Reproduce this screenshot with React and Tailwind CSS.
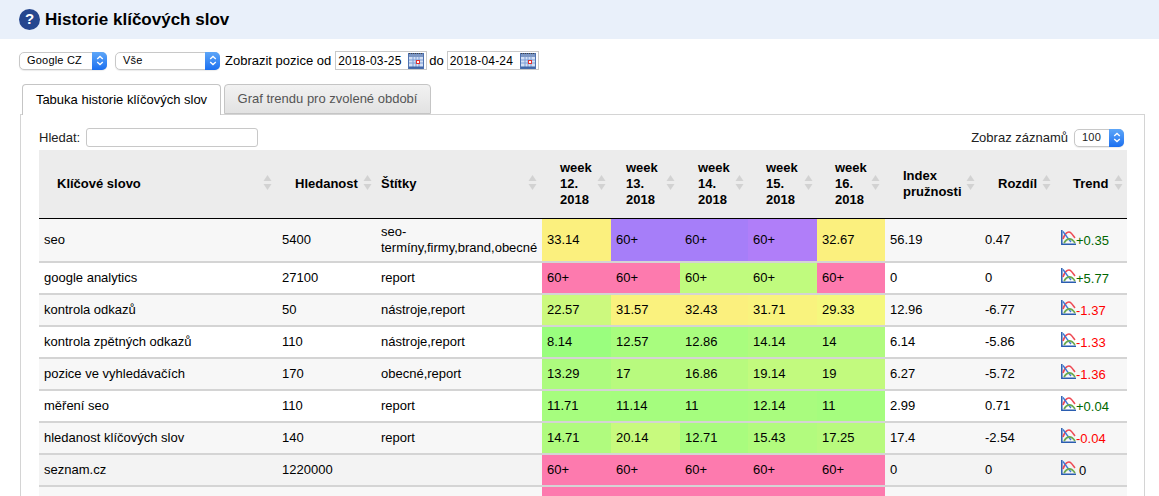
import { useState } from "react"

const pink = "bg-[#fd7aae]"

const rows = [
    { kw: "seo", vol: "5400", tags: "seo-termíny,firmy,brand,obecné", tall: true, cells: [["33.14", "bg-[#fbf07e]"], ["60+", "bg-[#a67ef9]"], ["60+", "bg-[#a67ef9]"], ["60+", "bg-[#b07ef9]"], ["32.67", "bg-[#fbf07e]"]], idx: "56.19", diff: "0.47", trend: "+0.35", color: "text-[#006600]" },
    { kw: "google analytics", vol: "27100", tags: "report", cells: [["60+", pink], ["60+", pink], ["60+", "bg-[#c0fb7e]"], ["60+", "bg-[#c0fb7e]"], ["60+", pink]], idx: "0", diff: "0", trend: "+5.77", color: "text-[#006600]" },
    { kw: "kontrola odkazů", vol: "50", tags: "nástroje,report", cells: [["22.57", "bg-[#ccf97e]"], ["31.57", "bg-[#faf27e]"], ["32.43", "bg-[#fbf07e]"], ["31.71", "bg-[#f9f37e]"], ["29.33", "bg-[#f5f87e]"]], idx: "12.96", diff: "-6.77", trend: "-1.37", color: "text-[#ff0000]" },
    { kw: "kontrola zpětných odkazů", vol: "110", tags: "nástroje,report", cells: [["8.14", "bg-[#9afe7e]"], ["12.57", "bg-[#a8fd7e]"], ["12.86", "bg-[#a9fd7e]"], ["14.14", "bg-[#b0fb7e]"], ["14", "bg-[#b0fb7e]"]], idx: "6.14", diff: "-5.86", trend: "-1.33", color: "text-[#ff0000]" },
    { kw: "pozice ve vyhledávačích", vol: "170", tags: "obecné,report", cells: [["13.29", "bg-[#adfb7e]"], ["17", "bg-[#b8fa7e]"], ["16.86", "bg-[#b8fa7e]"], ["19.14", "bg-[#c2fa7e]"], ["19", "bg-[#c2fa7e]"]], idx: "6.27", diff: "-5.72", trend: "-1.36", color: "text-[#ff0000]" },
    { kw: "měření seo", vol: "110", tags: "report", cells: [["11.71", "bg-[#a6fd7e]"], ["11.14", "bg-[#a5fd7e]"], ["11", "bg-[#a5fd7e]"], ["12.14", "bg-[#a9fc7e]"], ["11", "bg-[#a5fd7e]"]], idx: "2.99", diff: "0.71", trend: "+0.04", color: "text-[#006600]" },
    { kw: "hledanost klíčových slov", vol: "140", tags: "report", cells: [["14.71", "bg-[#b0fb7e]"], ["20.14", "bg-[#c8fa7e]"], ["12.71", "bg-[#a9fc7e]"], ["15.43", "bg-[#b2fb7e]"], ["17.25", "bg-[#b8fa7e]"]], idx: "17.4", diff: "-2.54", trend: "-0.04", color: "text-[#ff0000]" },
    { kw: "seznam.cz", vol: "1220000", tags: "", bg: "bg-[#f3f3f3]", cells: [["60+", pink], ["60+", pink], ["60+", pink], ["60+", pink], ["60+", pink]], idx: "0", diff: "0", trend: "0", color: "text-black" },
    { kw: "", vol: "", tags: "", cells: [["", pink], ["", pink], ["", pink], ["", pink], ["", pink]], idx: "", diff: "", trend: "", color: "text-black" },
]

function SortArrows() {
    return (
        <svg width="9" height="17" viewBox="0 0 9 17" className="shrink-0 -mt-[2px]">
            <path d="M4.5 1 L8.5 7 L0.5 7 Z" fill="#d2d2d2" />
            <path d="M4.5 16 L8.5 10 L0.5 10 Z" fill="#d2d2d2" />
        </svg>
    )
}

function SelectArrows() {
    return (
        <span className="w-[15px] self-stretch -my-px -mr-px rounded-r-[5px] bg-gradient-to-b from-[#5da6f8] to-[#1a6ff0] flex items-center justify-center">
            <svg width="8" height="11" viewBox="0 0 8 11">
                <path d="M1.2 4 L4 1.4 L6.8 4 M1.2 7 L4 9.6 L6.8 7" fill="none" stroke="#fff" strokeWidth="1.3" />
            </svg>
        </span>
    )
}

function CalendarIcon() {
    return (
        <svg width="16" height="17" viewBox="0 0 16 17" className="shrink-0">
            <rect x="0.5" y="1.5" width="15" height="15" fill="#d4e0f4" stroke="#4f72b0" />
            <path d="M1 1.5 H15" stroke="#444" strokeDasharray="1 1" />
            <rect x="1" y="2" width="14" height="3" fill="#7d97c4" />
            <path d="M1 8 H15 M1 11 H15 M5 5 V15 M8 5 V15 M11 5 V15" stroke="#7c9ed6" strokeWidth="1" />
            <rect x="8.5" y="8.5" width="3" height="3" fill="#fff" stroke="#e03030" />
            <rect x="1" y="14.5" width="14" height="2" fill="#3f66a8" />
        </svg>
    )
}

function TrendIcon() {
    return (
        <svg width="15" height="15" viewBox="0 0 15 15" className="shrink-0">
            <path d="M0.8 0 V14.2 H15" fill="none" stroke="#2a5db0" strokeWidth="1.5" />
            <path d="M2 9 C4 2 8 1 10 3 S13 7 14 8" fill="none" stroke="#ee4b55" strokeWidth="1.6" />
            <path d="M2 1.5 L6 7 L10 12" fill="none" stroke="#3a78d8" strokeWidth="1.3" />
            <path d="M3 13 C6 8 10 7 14 13" fill="none" stroke="#6aa84f" strokeWidth="1.6" />
        </svg>
    )
}

function HeadCell({ children, className = "" }) {
    return (
        <th className={`p-0 font-bold text-left align-middle ${className}`}>
            <div className="flex items-center justify-between">
                <span>{children}</span>
                <SortArrows />
            </div>
        </th>
    )
}

function Select({ label, width }) {
    return (
        <span className={`inline-flex items-center h-[18px] ${width} rounded-[5px] border border-[#c8c8c8] bg-white text-[11px] tracking-[0.2px] pl-[7px] justify-between shadow-[0_1px_1px_rgba(0,0,0,0.08)]`}>
            {label}
            <SelectArrows />
        </span>
    )
}

function DateField({ value }) {
    return (
        <span className="inline-flex items-center h-[19px] w-[92px] border border-[#c9c9c9] bg-white pl-[2px] pr-[2px] text-[12px] justify-between">
            <span className="tracking-[0.2px]">{value}</span>
            <CalendarIcon />
        </span>
    )
}

export default function App() {
    const [tab] = useState(0)

    return (
        <div className="h-[496px] overflow-hidden bg-white text-black text-[13px] font-['Liberation_Sans',Arial,sans-serif]">
            <div className="h-[39px] bg-[#e9f0fa] flex items-center pl-[19px] gap-[5px]">
                <span className="w-[21px] h-[21px] rounded-full bg-[#25478f] text-white font-bold text-[15px] flex items-center justify-center">?</span>
                <h1 className="text-[17px] font-bold">Historie klíčových slov</h1>
            </div>

            <div className="flex items-center h-[19px] mt-[12px] ml-[19px]">
                <Select label="Google CZ" width="w-[88px]" />
                <span className="w-[8px]" />
                <Select label="Vše" width="w-[105px]" />
                <span className="ml-[5px] mr-[4px]">Zobrazit pozice od</span>
                <DateField value="2018-03-25" />
                <span className="ml-[2px] mr-[3px]">do</span>
                <DateField value="2018-04-24" />
            </div>

            <div className="flex ml-[22px] mt-[14px] gap-[3px] h-[31px] relative z-10">
                <div className={`w-[199px] h-[31px] border border-b-0 border-[#c5c5c5] rounded-t-[4px] bg-white flex items-center justify-center ${tab === 0 ? "" : ""}`}>
                    Tabuka historie klíčových slov
                </div>
                <div className="w-[207px] h-[30px] border border-[#c5c5c5] rounded-t-[4px] bg-gradient-to-b from-[#f2f2f2] to-[#e2e2e2] text-[#555] flex items-center justify-center">
                    Graf trendu pro zvolené období
                </div>
            </div>

            <div className="ml-[20px] mr-[14px] -mt-px border-l border-r border-t border-[#d4d4d4] pl-[18px] pr-[16px] h-[400px]">
                <div className="flex items-center justify-between h-[35px] pt-[10px] pr-[4px] text-[#222]">
                    <label className="flex items-center gap-[6px]">
                        Hledat:
                        <input className="w-[172px] h-[19px] border border-[#c8c8c8] rounded-[3px] bg-white" />
                    </label>
                    <span className="flex items-center gap-[6px]">
                        Zobraz záznamů
                        <Select label="100" width="w-[50px]" />
                    </span>
                </div>

                <table className="w-[1088px] table-fixed border-collapse">
                    <colgroup>
                        <col className="w-[239px]" />
                        <col className="w-[99px]" />
                        <col className="w-[165px]" />
                        <col className="w-[69px]" />
                        <col className="w-[69px]" />
                        <col className="w-[68px]" />
                        <col className="w-[69px]" />
                        <col className="w-[68px]" />
                        <col className="w-[95px]" />
                        <col className="w-[76px]" />
                        <col className="w-[71px]" />
                    </colgroup>
                    <thead>
                        <tr className="h-[68px] bg-[#ececec] border-b border-black leading-[16px]">
                            <HeadCell className="pl-[18px] pr-[6px]">Klíčové slovo</HeadCell>
                            <HeadCell className="pl-[17px] pr-[5px]">Hledanost</HeadCell>
                            <HeadCell className="pl-[4px] pr-[5px]">Štítky</HeadCell>
                            <HeadCell className="pl-[18px] pr-[5px]">week<br />12.<br />2018</HeadCell>
                            <HeadCell className="pl-[15px] pr-[5px]">week<br />13.<br />2018</HeadCell>
                            <HeadCell className="pl-[18px] pr-[4px]">week<br />14.<br />2018</HeadCell>
                            <HeadCell className="pl-[18px] pr-[4px]">week<br />15.<br />2018</HeadCell>
                            <HeadCell className="pl-[18px] pr-[5px]">week<br />16.<br />2018</HeadCell>
                            <HeadCell className="pl-[18px] pr-[5px]">Index<br />pružnosti</HeadCell>
                            <HeadCell className="pl-[18px] pr-[5px]">Rozdíl</HeadCell>
                            <HeadCell className="pl-[17px] pr-[4px]">Trend</HeadCell>
                        </tr>
                    </thead>
                    <tbody>
                        {rows.map((row, i) => (
                            <tr key={i} className={`border-b-[2px] border-[#d4d4d4] ${row.tall ? "h-[44px]" : "h-[32px]"} ${row.bg || (i % 2 === 0 ? "bg-[#f7f7f7]" : "bg-white")}`}>
                                <td className="p-0 pl-[5px]">{row.kw}</td>
                                <td className="p-0 pl-[4px]">{row.vol}</td>
                                <td className="p-0 pl-[4px] leading-[16px]">{row.tags}</td>
                                {row.cells.map(([value, bg], j) => (
                                    <td key={j} className={`p-0 pl-[5px] ${bg}`}>{value}</td>
                                ))}
                                <td className="p-0 pl-[5px]">{row.idx}</td>
                                <td className="p-0 pl-[5px]">{row.diff}</td>
                                <td className="p-0 pl-[5px]">
                                    {row.trend && (
                                        <span className={`flex items-start ${row.color}`}>
                                            <TrendIcon />
                                            <span className={`mt-[1px] ${row.trend === "0" ? "ml-[3px]" : ""}`}>{row.trend}</span>
                                        </span>
                                    )}
                                </td>
                            </tr>
                        ))}
                    </tbody>
                </table>
            </div>
        </div>
    )
}
